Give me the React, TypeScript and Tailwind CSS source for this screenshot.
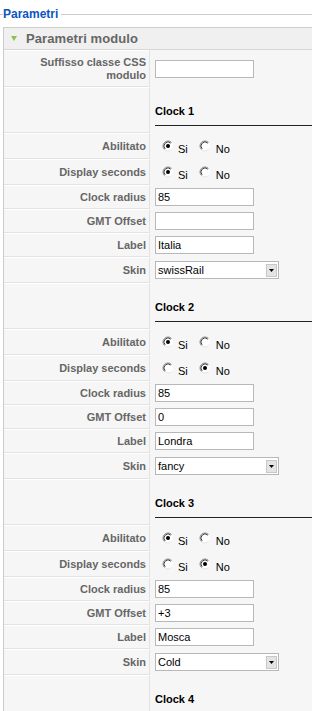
import type { ReactNode } from "react";

type Clock = {
  n: number;
  enabled: "si" | "no";
  seconds: "si" | "no";
  radius: string;
  gmt: string;
  label: string;
  skin: string;
};

const clocks: Clock[] = [
  { n: 1, enabled: "si", seconds: "si", radius: "85", gmt: "", label: "Italia", skin: "swissRail" },
  { n: 2, enabled: "si", seconds: "no", radius: "85", gmt: "0", label: "Londra", skin: "fancy" },
  { n: 3, enabled: "si", seconds: "no", radius: "85", gmt: "+3", label: "Mosca", skin: "Cold" }
];

/** Radio in stile Windows classico: arco scuro in alto a sinistra. */
function Radio({ checked }: { checked: boolean }) {
  return (
    <svg className="shrink-0" width="12" height="12" viewBox="0 0 12 12" aria-hidden="true">
      <circle cx="6" cy="6" r="5" fill="#fff" />
      <path d="M9.54 9.54 A5 5 0 0 1 2.46 9.54" fill="none" stroke="#e6e6e6" strokeWidth="1" />
      <path d="M2.46 9.54 A5 5 0 0 1 9.54 2.46" fill="none" stroke="#8a8a8a" strokeWidth="1" />
      <path d="M3.17 8.83 A4 4 0 0 1 8.83 3.17" fill="none" stroke="#404040" strokeWidth="1" />
      {checked ? <circle cx="6" cy="6" r="2" fill="#000" /> : null}
    </svg>
  );
}

function YesNo({ value }: { value: "si" | "no" }) {
  return (
    <div className="ml-[7px] flex items-center text-[11px] text-black">
      <Radio checked={value === "si"} />
      <span className="ml-[4px] translate-y-[3px]">Si</span>
      <span className="ml-[11px]">
        <Radio checked={value === "no"} />
      </span>
      <span className="ml-[5px] translate-y-[3px]">No</span>
    </div>
  );
}

function TextBox({ value }: { value: string }) {
  return (
    <input
      className="box-border h-[18px] w-[99px] border border-[#b8b8b8] bg-white pl-[2px] text-[11px] text-black outline-none"
      readOnly
      value={value}
    />
  );
}

function Select({ value }: { value: string }) {
  return (
    <div className="flex h-[18px] w-[124px] items-center justify-between border border-[#b8b8b8] bg-white pl-[2px] pr-[1px] text-[11px] text-black">
      <span>{value}</span>
      <span className="flex h-[13px] w-[11px] items-center justify-center border border-[#c8c8c8] bg-[#e4e4e4]">
        <svg width="5" height="3" viewBox="0 0 5 3" aria-hidden="true">
          <path d="M0 0h5L2.5 3z" fill="#000" />
        </svg>
      </span>
    </div>
  );
}

function Row({ label, height, children }: { label: ReactNode; height: string; children?: ReactNode }) {
  return (
    <div className={`flex ${height}`}>
      <div className="flex w-[146px] shrink-0 items-center justify-end border-r border-b border-t border-r-[#e2e2e2] border-b-[#e2e2e2] border-t-white pr-[3px] text-right text-[11px] font-bold leading-[13px] text-[#666]">
        {label}
      </div>
      <div className="flex min-w-0 flex-1 items-center pl-[5px]">{children}</div>
    </div>
  );
}

function ClockHeading({ n }: { n: number }) {
  return (
    <div className="flex h-[46px]">
      <div className="w-[146px] shrink-0 border-r border-b border-t border-r-[#e2e2e2] border-b-[#e2e2e2] border-t-white" />
      <div className="flex-1 pl-[5px] pt-[17px]">
        <p className="h-[14px] text-[11px] font-bold leading-[14px] text-black">Clock {n}</p>
        <div className="mt-[7px] h-px bg-[#222]" />
      </div>
    </div>
  );
}

function ClockBlock({ clock }: { clock: Clock }) {
  return (
    <>
      <ClockHeading n={clock.n} />
      <Row label="Abilitato" height="h-[26px]">
        <YesNo value={clock.enabled} />
      </Row>
      <Row label="Display seconds" height="h-[26px]">
        <YesNo value={clock.seconds} />
      </Row>
      <Row label="Clock radius" height="h-[24px]">
        <TextBox value={clock.radius} />
      </Row>
      <Row label="GMT Offset" height="h-[24px]">
        <TextBox value={clock.gmt} />
      </Row>
      <Row label="Label" height="h-[24px]">
        <TextBox value={clock.label} />
      </Row>
      <Row label="Skin" height="h-[26px]">
        <Select value={clock.skin} />
      </Row>
    </>
  );
}

export default function App() {
  return (
    <div className="h-[711px] w-[312px] overflow-hidden bg-white font-['Liberation_Sans',Arial,sans-serif]">
      <div className="flex h-[27px] items-center pt-px">
        <div className="h-px w-[3px] bg-[#ccc]" />
        <span className="text-[12px] font-bold text-[#0b55c4]">Parametri</span>
        <div className="ml-[3px] h-px flex-1 bg-[#ccc]" />
      </div>
      <div className="ml-[3px] border-l border-t border-[#ccc] bg-[#f6f6f6]">
        <div className="flex h-[22px] items-center border-b border-[#d6d6d6] bg-[#f0f0f0] pl-[7px]">
          <svg width="6" height="5" viewBox="0 0 6 5" aria-hidden="true">
            <path d="M0 0h6L3 5z" fill="#8cc152" />
          </svg>
          <span className="ml-[9px] text-[13px] font-bold tracking-[0.1px] text-[#666]">Parametri modulo</span>
        </div>
        <Row
          label={
            <span>
              Suffisso classe CSS
              <br />
              modulo
            </span>
          }
          height="h-[37px]"
        >
          <TextBox value="" />
        </Row>
        {clocks.map((clock) => (
          <ClockBlock clock={clock} key={clock.n} />
        ))}
        <ClockHeading n={4} />
      </div>
    </div>
  );
}
